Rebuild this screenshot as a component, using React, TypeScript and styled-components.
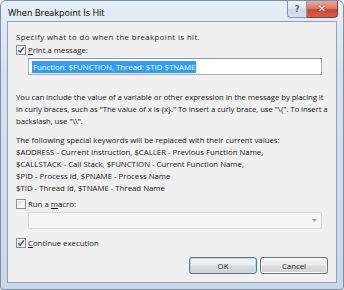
import React from 'react';
import styled, { createGlobalStyle } from 'styled-components';

const Global = createGlobalStyle`
  html, body { margin: 0; padding: 0; background: #ffffff; }
  body { width: 344px; height: 290px; overflow: hidden; }
`;

const Window = styled.div`
  box-sizing: border-box;
  width: 344px;
  height: 290px;
  display: flex;
  flex-direction: column;
  padding: 0 6px 6px 6px;
  border: 1px solid #7f90a6;
  border-radius: 6px 6px 3px 3px;
  background: linear-gradient(180deg, #e6eef7 0%, #d6e1ed 25%, #cbd8e7 100%);
  font-family: "Open Sans", "Noto Sans", sans-serif;
  font-size: 7.8px;
  color: #1a1a1a;
`;

const TitleBar = styled.div`
  height: 20px;
  display: flex;
  align-items: flex-start;
  justify-content: space-between;
`;

const Title = styled.div`
  padding: 6px 0 0 1px;
  font-size: 9px;
  line-height: 12px;
  color: #000;
`;

const Caption = styled.div`
  display: flex;
  margin-right: -1px;
`;

const CapButton = styled.div<{ $close?: boolean }>`
  box-sizing: border-box;
  height: 17px;
  width: ${p => (p.$close ? '31px' : '20px')};
  display: flex;
  align-items: center;
  justify-content: center;
  border: 1px solid ${p => (p.$close ? '#8a3a2e' : '#8496ad')};
  border-top: none;
  border-left-width: ${p => (p.$close ? '0' : '1px')};
  border-radius: ${p => (p.$close ? '0 0 4px 0' : '0 0 0 4px')};
  background: ${p =>
    p.$close
      ? 'linear-gradient(180deg, #e8a899 0%, #dc7b67 45%, #c9462f 55%, #d8614a 100%)'
      : 'linear-gradient(180deg, #eef3f9 0%, #dde6f1 45%, #c9d6e5 55%, #d6e1ee 100%)'};
  color: ${p => (p.$close ? '#fff' : '#5d6e85')};
  text-shadow: ${p => (p.$close ? '0 0 1px #6a1d12' : 'none')};
  font-family: "DejaVu Sans", sans-serif;
  font-weight: bold;
  font-size: ${p => (p.$close ? '10px' : '9px')};
  line-height: 1;
`;

const Client = styled.div`
  flex: 1;
  display: flex;
  flex-direction: column;
  border: 1px solid #8fa1b6;
  background: #f0f0f0;
  padding: 0 7px 0 8px;
`;

const Lines = styled.div<{ $top?: number; $spacing?: number }>`
  margin-top: ${p => p.$top ?? 0}px;
  letter-spacing: ${p => p.$spacing ?? 0}px;
  display: flex;
  flex-direction: column;
`;

const Line = styled.div`
  line-height: 12px;
  white-space: nowrap;
`;

const CheckRow = styled.div<{ $top?: number }>`
  margin-top: ${p => p.$top ?? 0}px;
  display: flex;
  align-items: center;
  gap: 2px;
  line-height: 12px;
  white-space: nowrap;
`;

const Box = styled.div`
  box-sizing: border-box;
  width: 10px;
  height: 10px;
  border: 1px solid #8e8f8f;
  background: linear-gradient(135deg, #dcdcdc 0%, #f4f4f4 60%, #ffffff 100%);
  box-shadow: inset 0 0 0 1px #f4f4f4;
  display: flex;
  align-items: center;
  justify-content: center;
`;

const U = styled.span`
  text-decoration: underline;
`;

const TextField = styled.div`
  box-sizing: border-box;
  margin: 2px 7px 0 12px;
  height: 17px;
  border: 1px solid #abadb3;
  border-top-color: #8e9aa8;
  background: #fff;
  display: flex;
  align-items: center;
  padding: 0 3px;
  white-space: nowrap;
`;

const Selected = styled.span`
  background: #3399ff;
  color: #fff;
  line-height: 12px;
  padding: 0 1px;
`;

const Combo = styled.div`
  box-sizing: border-box;
  margin: 2px 7px 0 12px;
  height: 17px;
  border: 1px solid #d5d7da;
  border-radius: 2px;
  background: #f4f4f4;
  display: flex;
  align-items: center;
  justify-content: flex-end;
  padding-right: 4px;
`;

const Buttons = styled.div`
  margin-top: 8px;
  display: flex;
  justify-content: flex-end;
  gap: 3px;
  padding-right: 1px;
`;

const Button = styled.div<{ $default?: boolean }>`
  box-sizing: border-box;
  width: 68px;
  height: 17px;
  display: flex;
  align-items: center;
  justify-content: center;
  border: 1px solid ${p => (p.$default ? '#3c7fb1' : '#707070')};
  border-radius: 3px;
  background: linear-gradient(180deg, #f4f4f4 0%, #ececec 48%, #dddddd 52%, #d2d2d2 100%);
  box-shadow: ${p => (p.$default ? 'inset 0 0 0 1px #b7dbf1' : 'inset 0 0 0 1px #fbfbfb')};
  line-height: 12px;
`;

const Check = () => (
  <svg width="8" height="8" viewBox="0 0 9 9">
    <path d="M1.5 4.8 L3.6 7 L7.6 1.6" fill="none" stroke="#3b4f7d" strokeWidth="1.6" />
  </svg>
);

const Arrow = () => (
  <svg width="5" height="3" viewBox="0 0 5 3">
    <path d="M0 0 H5 L2.5 3 Z" fill="#a8a8a8" />
  </svg>
);

const paragraph = [
  'You can include the value of a variable or other expression in the message by placing it',
  'in curly braces, such as "The value of x is {x}." To insert a curly brace, use "\\{". To insert a',
  'backslash, use "\\\\".',
];

const keywords = [
  'The following special keywords will be replaced with their current values:',
  '$ADDRESS - Current Instruction, $CALLER - Previous Function Name,',
  '$CALLSTACK - Call Stack, $FUNCTION - Current Function Name,',
  '$PID - Process Id, $PNAME - Process Name',
  '$TID - Thread Id, $TNAME - Thread Name',
];

export default function App() {
  return (
    <>
      <Global />
      <Window>
        <TitleBar>
          <Title>When Breakpoint Is Hit</Title>
          <Caption>
            <CapButton>?</CapButton>
            <CapButton $close>✕</CapButton>
          </Caption>
        </TitleBar>
        <Client>
          <Lines $top={9} $spacing={0.4}>
            <Line>Specify what to do when the breakpoint is hit.</Line>
          </Lines>
          <CheckRow $top={1}>
            <Box><Check /></Box>
            <span><U>P</U>rint a message:</span>
          </CheckRow>
          <TextField>
            <Selected>Function: $FUNCTION, Thread: $TID $TNAME</Selected>
          </TextField>
          <Lines $top={16} $spacing={-0.08}>
            {paragraph.map(l => <Line key={l}>{l}</Line>)}
          </Lines>
          <Lines $top={7}>
            {keywords.map(l => <Line key={l}>{l}</Line>)}
          </Lines>
          <CheckRow $top={4}>
            <Box />
            <span>Run a <U>m</U>acro:</span>
          </CheckRow>
          <Combo><Arrow /></Combo>
          <CheckRow $top={8}>
            <Box><Check /></Box>
            <span><U>C</U>ontinue execution</span>
          </CheckRow>
          <Buttons>
            <Button $default>OK</Button>
            <Button>Cancel</Button>
          </Buttons>
        </Client>
      </Window>
    </>
  );
}
